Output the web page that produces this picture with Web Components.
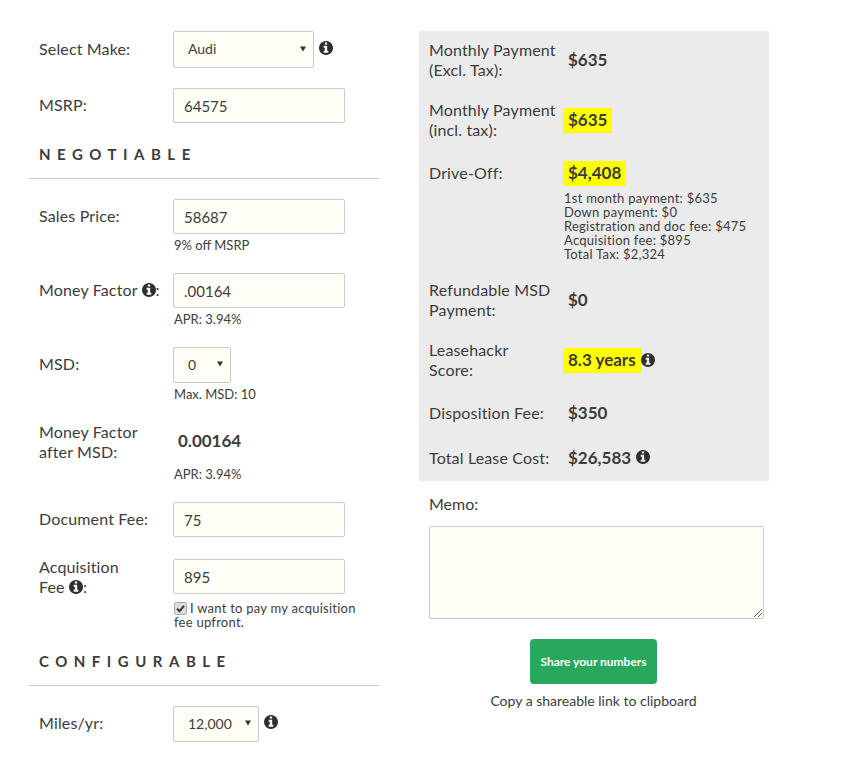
<!DOCTYPE html>
<html>
<head>
<meta charset="utf-8">
<title>Lease calculator</title>
<style>
    html, body { margin: 0; background: #fff; }
    body {
        font-family: Lato, "Open Sans", sans-serif;
        font-size: 16px;
        color: #3c3c3c;
    }
</style>
</head>
<body>
<lease-page>
    <div slot="left">
        <lease-field>
            <span slot="label">Select Make:</span>
            <select-box width="141">Audi</select-box><info-icon gap="5" lift="3"></info-icon>
        </lease-field>
        <lease-field>
            <span slot="label">MSRP:</span>
            <text-box>64575</text-box>
        </lease-field>
        <section-head>NEGOTIABLE</section-head>
        <lease-field>
            <span slot="label">Sales Price:</span>
            <text-box>58687</text-box>
            <span slot="note">9% off MSRP</span>
        </lease-field>
        <lease-field>
            <span slot="label">Money Factor <info-icon></info-icon>:</span>
            <text-box>.00164</text-box>
            <span slot="note">APR: 3.94%</span>
        </lease-field>
        <lease-field>
            <span slot="label">MSD:</span>
            <select-box width="58" short>0</select-box>
            <span slot="note">Max. MSD: 10</span>
        </lease-field>
        <lease-field tall>
            <span slot="label">Money Factor<br>after MSD:</span>
            <strong class="plain-value">0.00164</strong>
            <span slot="note">APR: 3.94%</span>
        </lease-field>
        <lease-field>
            <span slot="label">Document Fee:</span>
            <text-box>75</text-box>
        </lease-field>
        <lease-field tall>
            <span slot="label">Acquisition<br>Fee <info-icon></info-icon>:</span>
            <text-box class="raised">895</text-box>
            <check-note slot="note">I want to pay my acquisition fee upfront.</check-note>
        </lease-field>
        <section-head>CONFIGURABLE</section-head>
        <lease-field>
            <span slot="label">Miles/yr:</span>
            <select-box width="86" short>12,000</select-box><info-icon gap="5" lift="4"></info-icon>
        </lease-field>
    </div>

    <result-panel slot="right">
        <result-row tall>
            <span slot="label">Monthly Payment<br>(Excl. Tax):</span>
            <result-value>$635</result-value>
        </result-row>
        <result-row tall>
            <span slot="label">Monthly Payment<br>(incl. tax):</span>
            <result-value marked>$635</result-value>
        </result-row>
        <result-row>
            <span slot="label">Drive-Off:</span>
            <result-value marked>$4,408</result-value>
            <div slot="detail">
                1st month payment: $635<br>
                Down payment: $0<br>
                Registration and doc fee: $475<br>
                Acquisition fee: $895<br>
                Total Tax: $2,324
            </div>
        </result-row>
        <result-row tall>
            <span slot="label">Refundable MSD<br>Payment:</span>
            <result-value>$0</result-value>
        </result-row>
        <result-row tall>
            <span slot="label">Leasehackr<br>Score:</span>
            <result-value marked>8.3 years</result-value><info-icon lift="2"></info-icon>
        </result-row>
        <result-row>
            <span slot="label">Disposition Fee:</span>
            <result-value>$350</result-value>
        </result-row>
        <result-row>
            <span slot="label">Total Lease Cost:</span>
            <result-value>$26,583</result-value><info-icon lift="4"></info-icon>
        </result-row>
    </result-panel>

    <share-box slot="right"></share-box>
</lease-page>

<script>
    const INFO_PATH = "M1152 1376v-160q0-14-9-23t-23-9h-96v-512q0-14-9-23t-23-9h-320q-14 0-23 9t-9 23v160q0 14 9 23t23 9h96v320h-96q-14 0-23 9t-9 23v160q0 14 9 23t23 9h448q14 0 23-9t9-23zm-128-896v-160q0-14-9-23t-23-9h-192q-14 0-23 9t-9 23v160q0 14 9 23t23 9h192q14 0 23-9t9-23zm640 416q0 209-103 385.5t-279.5 279.5-385.5 103-385.5-103-279.5-279.5-103-385.5 103-385.5 279.5-279.5 385.5-103 385.5 103 279.5 279.5 103 385.5z";

    class LeasePage extends HTMLElement {
        constructor() {
            super();
            this.attachShadow({ mode: "open" });
            this.shadowRoot.innerHTML = `
                <style>
                    :host {
                        display: flex;
                        gap: 40px;
                        padding: 31px 0 0 29px;
                        box-sizing: border-box;
                        width: 845px;
                        height: 763px;
                        overflow: hidden;
                    }
                    #left, #right {
                        width: 350px;
                        flex: none;
                    }
                    ::slotted([slot="left"]) {
                        display: flex;
                        flex-direction: column;
                        gap: 20px;
                    }
                    #right {
                        display: flex;
                        flex-direction: column;
                    }
                </style>
                <div id="left"><slot name="left"></slot></div>
                <div id="right"><slot name="right"></slot></div>
            `;
        }
    }

    class LeaseField extends HTMLElement {
        constructor() {
            super();
            this.attachShadow({ mode: "open" });
            this.shadowRoot.innerHTML = `
                <style>
                    :host {
                        display: grid;
                        grid-template-columns: 134px 1fr;
                        padding-left: 10px;
                    }
                    #label {
                        line-height: 20px;
                        letter-spacing: .15px;
                        align-self: center;
                        margin: -1px 0 1px;
                    }
                    :host([tall]) #label {
                        align-self: start;
                        margin: 0;
                    }
                    #control {
                        display: flex;
                        align-items: center;
                        min-width: 0;
                    }
                    #note {
                        grid-column: 2;
                        font-size: 13px;
                        line-height: 15px;
                        margin-top: 4px;
                        padding-left: 1px;
                    }
                    ::slotted(.plain-value) {
                        font-size: 17px;
                        font-weight: 700;
                        height: 41px;
                        line-height: 38px;
                        padding-left: 5px;
                    }
                    ::slotted(.raised) {
                        margin-bottom: 1px;
                    }
                </style>
                <div id="label"><slot name="label"></slot></div>
                <div id="control"><slot></slot></div>
                <div id="note"><slot name="note"></slot></div>
            `;
        }
        connectedCallback() {
            const note = this.querySelector('[slot="note"]');
            if (!note) {
                this.shadowRoot.querySelector("#note").style.display = "none";
            }
        }
    }

    class TextBox extends HTMLElement {
        constructor() {
            super();
            this.attachShadow({ mode: "open" });
            this.shadowRoot.innerHTML = `
                <style>
                    :host {
                        display: block;
                        box-sizing: border-box;
                        width: 172px;
                        height: 35px;
                        line-height: 34px;
                        padding: 0 10px;
                        font-size: 15px;
                        background-color: #fffff7;
                        border: 1px solid #ccc;
                        border-radius: 2px;
                    }
                </style>
                <slot></slot>
            `;
        }
    }

    class SelectBox extends HTMLElement {
        constructor() {
            super();
            this.attachShadow({ mode: "open" });
            this.shadowRoot.innerHTML = `
                <style>
                    :host {
                        display: flex;
                        align-items: center;
                        justify-content: space-between;
                        box-sizing: border-box;
                        height: 37px;
                        padding: 0 7px 2px 14px;
                        font-size: 14px;
                        background-color: #fffff7;
                        border: 1px solid #ccc;
                        border-radius: 2px;
                        flex: none;
                    }
                    :host([short]) { height: 36px; }
                    svg { display: block; }
                </style>
                <slot></slot>
                <svg width="6" height="6" viewBox="0 0 6 6"><path d="M0 .5h6L3 5.5z" fill="#333"/></svg>
            `;
        }
        connectedCallback() {
            this.style.width = this.getAttribute("width") + "px";
        }
    }

    class InfoIcon extends HTMLElement {
        constructor() {
            super();
            this.attachShadow({ mode: "open" });
            this.shadowRoot.innerHTML = `
                <style>
                    :host {
                        display: inline-block;
                        width: 14px;
                        height: 14px;
                        vertical-align: -1px;
                        flex: none;
                    }
                    svg { display: block; }
                </style>
                <svg width="14" height="14" viewBox="128 128 1536 1536">
                    <path fill="#2f2f2f" fill-rule="evenodd" d="${INFO_PATH}"/>
                </svg>
            `;
        }
        connectedCallback() {
            if (this.hasAttribute("gap")) {
                this.style.marginLeft = this.getAttribute("gap") + "px";
            }
            if (this.hasAttribute("lift")) {
                this.style.marginBottom = this.getAttribute("lift") + "px";
            }
        }
    }

    class SectionHead extends HTMLElement {
        constructor() {
            super();
            this.attachShadow({ mode: "open" });
            this.shadowRoot.innerHTML = `
                <style>
                    :host {
                        display: block;
                        padding: 1px 0 14px 10px;
                        border-bottom: 1px solid #ccc;
                        font-size: 15px;
                        font-weight: 700;
                        line-height: 20px;
                        letter-spacing: 6.5px;
                    }
                </style>
                <slot></slot>
            `;
        }
    }

    class CheckNote extends HTMLElement {
        constructor() {
            super();
            this.attachShadow({ mode: "open" });
            this.shadowRoot.innerHTML = `
                <style>
                    :host {
                        display: block;
                        width: 190px;
                        margin-top: 0;
                        padding-bottom: 1px;
                        line-height: 14px;
                        letter-spacing: .25px;
                    }
                    svg {
                        width: 13px;
                        height: 13px;
                        vertical-align: -2px;
                        margin: 0 3px 0 0;
                    }
                </style>
                <svg viewBox="0 0 13 13">
                    <rect x=".5" y=".5" width="12" height="12" rx="2" fill="#ddd" stroke="#a5a5a5"/>
                    <path d="M3 6.6l2.5 2.6L10 3.8" fill="none" stroke="#333" stroke-width="2"/>
                </svg><slot></slot>
            `;
        }
    }

    class ResultPanel extends HTMLElement {
        constructor() {
            super();
            this.attachShadow({ mode: "open" });
            this.shadowRoot.innerHTML = `
                <style>
                    :host {
                        display: flex;
                        flex-direction: column;
                        gap: 20px;
                        padding: 10px;
                        background-color: #ebebeb;
                    }
                </style>
                <slot></slot>
            `;
        }
    }

    class ResultRow extends HTMLElement {
        constructor() {
            super();
            this.attachShadow({ mode: "open" });
            this.shadowRoot.innerHTML = `
                <style>
                    :host {
                        display: grid;
                        grid-template-columns: 134px 1fr;
                    }
                    #label {
                        line-height: 20px;
                        letter-spacing: .15px;
                        align-self: center;
                        margin: -1px 0 1px;
                    }
                    #value {
                        display: flex;
                        align-items: center;
                    }
                    :host([tall]) #value {
                        padding-bottom: 1px;
                    }
                    #detail {
                        grid-column: 2;
                        font-size: 13px;
                        letter-spacing: .25px;
                        line-height: 14px;
                        margin-top: 5px;
                        padding-left: 1px;
                    }
                </style>
                <div id="label"><slot name="label"></slot></div>
                <div id="value"><slot></slot></div>
                <div id="detail"><slot name="detail"></slot></div>
            `;
        }
        connectedCallback() {
            if (!this.querySelector('[slot="detail"]')) {
                this.shadowRoot.querySelector("#detail").style.display = "none";
            }
        }
    }

    class ResultValue extends HTMLElement {
        constructor() {
            super();
            this.attachShadow({ mode: "open" });
            this.shadowRoot.innerHTML = `
                <style>
                    :host {
                        display: block;
                        padding: 0 5px;
                        height: 25px;
                        line-height: 23px;
                        font-size: 17px;
                        font-weight: 700;
                    }
                    :host([marked]) {
                        background-color: #ffff00;
                    }
                </style>
                <slot></slot>
            `;
        }
    }

    class ShareBox extends HTMLElement {
        constructor() {
            super();
            this.attachShadow({ mode: "open" });
            this.shadowRoot.innerHTML = `
                <style>
                    :host {
                        display: block;
                        padding: 13px 0 0 10px;
                    }
                    #memo-label { line-height: 20px; }
                    #memo {
                        position: relative;
                        box-sizing: border-box;
                        width: 335px;
                        height: 93px;
                        margin-top: 12px;
                        background-color: #fffff7;
                        border: 1px solid #ccc;
                        border-radius: 2px;
                    }
                    #grip {
                        position: absolute;
                        right: 0;
                        bottom: 0;
                    }
                    #actions {
                        display: flex;
                        flex-direction: column;
                        align-items: center;
                        width: 329px;
                        margin-top: 20px;
                    }
                    button {
                        width: 127px;
                        height: 45px;
                        padding: 0;
                        border: none;
                        border-radius: 4px;
                        background-color: #28a85d;
                        color: #fff;
                        font-family: inherit;
                        font-size: 12px;
                        font-weight: 700;
                    }
                    #hint {
                        margin-top: 9px;
                        font-size: 14px;
                        line-height: 16px;
                    }
                </style>
                <div id="memo-label">Memo:</div>
                <div id="memo">
                    <svg id="grip" width="10" height="10" viewBox="0 0 10 10">
                        <path d="M1 9L9 1M5 9l4-4" stroke="#666" fill="none"/>
                    </svg>
                </div>
                <div id="actions">
                    <button type="button">Share your numbers</button>
                    <div id="hint">Copy a shareable link to clipboard</div>
                </div>
            `;
        }
    }

    customElements.define("lease-page", LeasePage);
    customElements.define("lease-field", LeaseField);
    customElements.define("text-box", TextBox);
    customElements.define("select-box", SelectBox);
    customElements.define("info-icon", InfoIcon);
    customElements.define("section-head", SectionHead);
    customElements.define("check-note", CheckNote);
    customElements.define("result-panel", ResultPanel);
    customElements.define("result-row", ResultRow);
    customElements.define("result-value", ResultValue);
    customElements.define("share-box", ShareBox);
</script>
</body>
</html>
